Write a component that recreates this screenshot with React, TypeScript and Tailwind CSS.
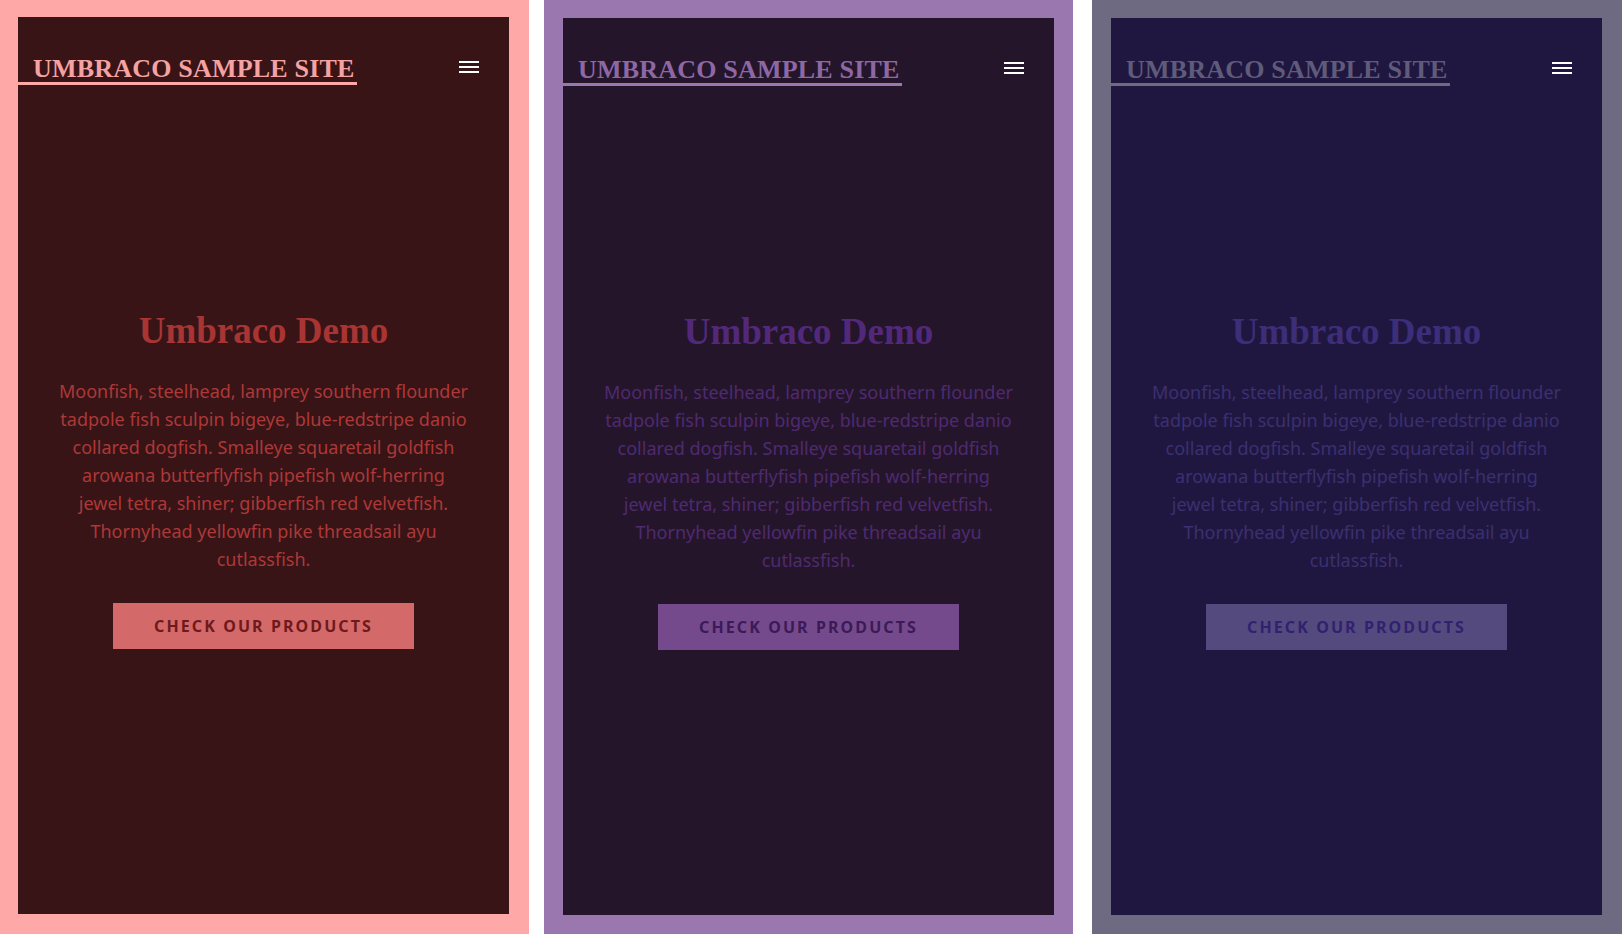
import React from 'react';

type Theme = {
  column: string;
  panel: string;
  logo: string;
  underline: string;
  heading: string;
  body: string;
  button: string;
  buttonText: string;
};

const themes: Theme[] = [
  {
    column: "w-[529px] pl-[18px] pt-[17px] bg-[#ffa8a8]",
    panel: "bg-[#381416]",
    logo: "text-[#f4a2a2]",
    underline: "border-[#ffa8a8]",
    heading: "text-[#a83434]",
    body: "text-[#ad3838]",
    button: "bg-[#d4696a]",
    buttonText: "text-[#6e1a1c]",
  },
  {
    column: "ml-[15px] w-[529px] pl-[19px] pt-[18px] bg-[#9a77ae]",
    panel: "bg-[#24152b]",
    logo: "text-[#8e68a4]",
    underline: "border-[#9a77ae]",
    heading: "text-[#52297a]",
    body: "text-[#4f2a70]",
    button: "bg-[#744a8c]",
    buttonText: "text-[#3c1a57]",
  },
  {
    column: "ml-[19px] w-[530px] pl-[19px] pt-[18px] bg-[#6d6a82]",
    panel: "bg-[#201740]",
    logo: "text-[#5f5b7a]",
    underline: "border-[#6d6a82]",
    heading: "text-[#3c2e78]",
    body: "text-[#3b3070]",
    button: "bg-[#554a7d]",
    buttonText: "text-[#2f2270]",
  },
];

function Preview({ t }: { t: Theme }) {
  return (
    <div className={`h-[934px] shrink-0 ${t.column}`}>
      <div className={`w-[491px] h-[897px] flex flex-col ${t.panel}`}>
        {/* header */}
        <header className="flex items-start justify-between">
          <a
            className={`mt-[40px] pl-[15px] pr-[2px] pb-[1px] border-b-[3px] ${t.underline} ${t.logo} font-['Liberation_Serif',serif] font-bold text-[26px] leading-[24px] tracking-[0.2px] whitespace-nowrap`}
          >
            UMBRACO SAMPLE SITE
          </a>
          <button className="mt-[44px] mr-[30px] flex flex-col gap-[3px]">
            <span className="block w-[20px] h-[2px] bg-white" />
            <span className="block w-[20px] h-[2px] bg-white" />
            <span className="block w-[20px] h-[2px] bg-white" />
          </button>
        </header>

        {/* hero */}
        <main className="flex flex-col items-center mt-[224px] text-center">
          <h1 className={`font-['Liberation_Serif',serif] font-bold text-[37px] leading-[44px] ${t.heading}`}>
            Umbraco Demo
          </h1>
          <p className={`mt-[24px] w-[409.5px] font-['Noto_Sans',sans-serif] text-[18px] leading-[28px] ${t.body}`}>
            Moonfish, steelhead, lamprey southern flounder tadpole fish sculpin bigeye, blue-redstripe danio
            collared dogfish. Smalleye squaretail goldfish arowana butterflyfish pipefish wolf-herring jewel
            tetra, shiner; gibberfish red velvetfish. Thornyhead yellowfin pike threadsail ayu cutlassfish.
          </p>
          <button
            className={`mt-[30px] w-[301px] h-[46px] flex items-center justify-center font-['Noto_Sans',sans-serif] font-bold text-[16px] tracking-[2.1px] ${t.button} ${t.buttonText}`}
          >
            CHECK OUR PRODUCTS
          </button>
        </main>
      </div>
    </div>
  );
}

export default function App() {
  return (
    <div className="flex w-[1622px] h-[934px] bg-white overflow-hidden">
      {themes.map((t, i) => (
        <Preview key={i} t={t} />
      ))}
    </div>
  );
}
